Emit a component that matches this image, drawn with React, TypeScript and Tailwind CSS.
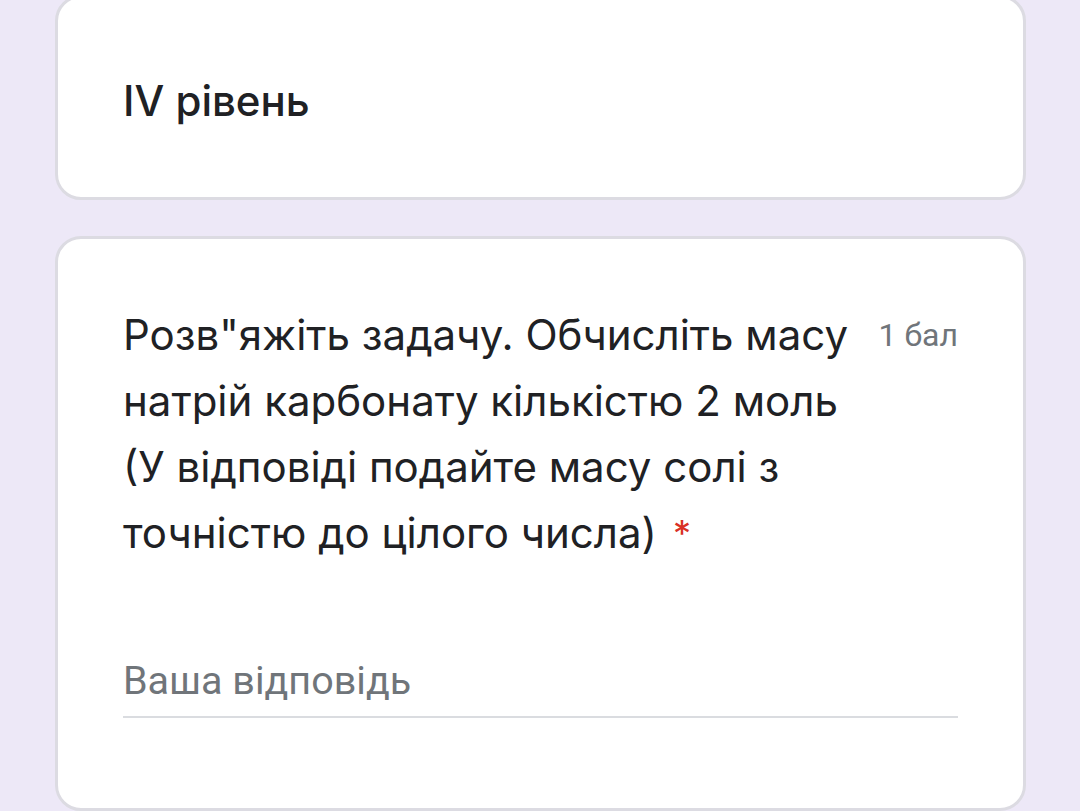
const sans = "font-['Inter','Noto_Sans',sans-serif]";
const roboto = "font-['Roboto','Noto_Sans',sans-serif]";

export default function App() {
  return (
    <div className="min-h-[811px] bg-[#ede8f7] px-[55px] pr-[54px] overflow-hidden">
      <div className="-mt-[5px] rounded-[26px] border-[3px] border-[#dcdbe2] bg-white h-[205px] px-[65px] flex items-center">
        <h2 className={`${sans} text-[#202124] text-[42px] font-medium leading-[66px] pt-[6px]`}>IV рівень</h2>
      </div>

      <div className="mt-[36px] rounded-[26px] border-[3px] border-[#dcdbe2] bg-white h-[575px] px-[65px] pt-[63px]">
        <div className="flex items-start">
          <div className={`${sans} flex-1 text-[#202124] text-[42px] leading-[66px]`}>
            Розв"яжіть задачу. Обчисліть масу натрій карбонату кількістю 2 моль (У відповіді подайте масу солі з точністю до цілого числа)
            <span className="text-[#d93025] ml-[16px] text-[36px] align-top">*</span>
          </div>
          <div className={`${roboto} ml-[24px] text-[#70757a] text-[32px] leading-[66px] whitespace-nowrap`}>1 бал</div>
        </div>

        <div className="mt-[90px] border-b-[2px] border-[#dadce0] pb-[10px]">
          <div className={`${roboto} text-[#70757a] text-[39.5px] leading-[50px]`}>Ваша відповідь</div>
        </div>
      </div>
    </div>
  );
}
